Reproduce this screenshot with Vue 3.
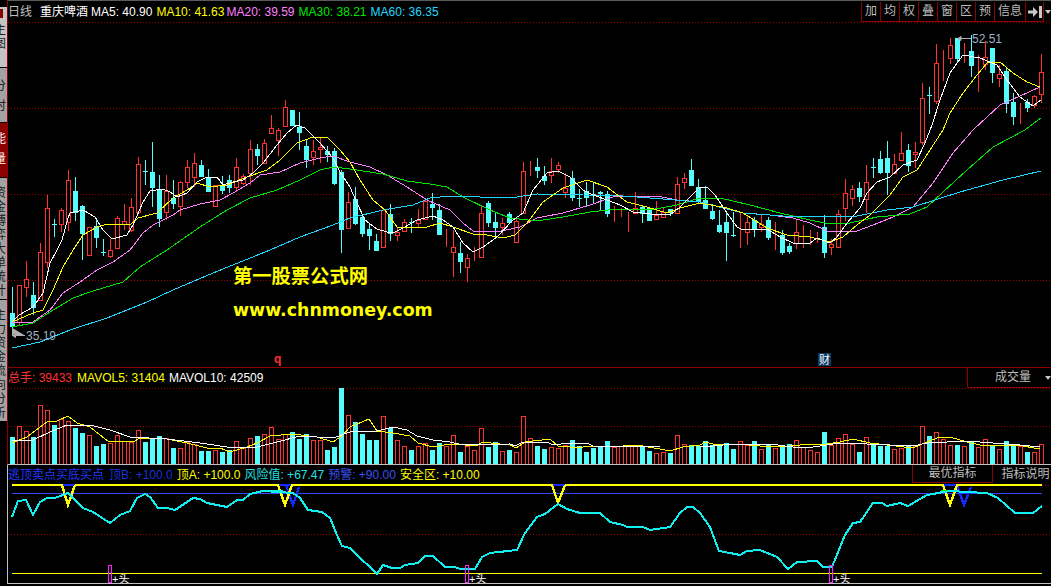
<template>
  <div class="terminal">
    <div class="side-tabs">
      <div v-for="tab in tabs" :key="tab.text" class="side-tab" :class="tab.cls">
        <span class="side-text">{{ tab.text }}</span>
      </div>
    </div>

    <div class="panels">
      <!-- K线 -->
      <section class="panel panel-main">
        <svg class="chart" width="1044" height="367" viewBox="7 0 1044 367">
          <line v-for="y in [22.5, 108.5, 194.5, 280.5]" :key="y" class="grid" x1="8" x2="1051" :y1="y" :y2="y" />
          <g shape-rendering="crispEdges">
            <template v-for="c in candles" :key="c.i">
              <rect class="wick" :class="c.type" :x="c.x + 2" :y="c.high" width="1" :height="Math.max(c.top - c.high, 0)" />
              <rect class="wick" :class="c.type" :x="c.x + 2" :y="c.bot" width="1" :height="Math.max(c.low - c.bot, 0)" />
              <rect v-if="c.type === 'up'" class="hollow" :x="c.x + 0.5" :y="c.top + 0.5" width="4" :height="c.bot - c.top" />
              <rect v-else class="solid" :x="c.x" :y="c.top" width="5" :height="c.bot - c.top + 1" />
            </template>
            <polyline v-for="l in maLines" :key="l.color" class="ma" :stroke="l.color" :points="l.points" />
          </g>
          <path class="mark-line" d="M958 38.5H971M958 38.5l3-2v4zM12.5 328V335.5H25M12.5 335.5l3-2v4z" />
          <text class="price" x="972" y="43">52.51</text>
          <text class="price" x="26" y="340">35.19</text>
          <text class="mark-q" x="274" y="363">q</text>
          <rect class="mark-bg" x="818" y="353" width="13" height="13" />
          <text class="mark-cai" x="819" y="364">财</text>
        </svg>

        <div class="legend legend-top">
          <span class="period">日线</span>
          <span class="stock">重庆啤酒</span>
          <span v-for="m in maLegend" :key="m.label" :class="{ tight: m.tight }" :style="{ color: m.color }">{{ m.label }}: {{ m.value }}</span>
        </div>

        <div class="toolbar">
          <span v-for="b in toolButtons" :key="b" class="tool-btn">{{ b }}</span>
          <span class="tool-btn tool-icon">
            <svg width="14" height="12" viewBox="0 0 14 12"><path d="M0 4.5h5V1l5 5-5 5V7.5H0z" fill="#c8c8c8" /><rect x="11" y="0" width="3" height="12" fill="#c8c8c8" /></svg>
          </span>
          <span class="tool-more"></span>
        </div>

        <div class="watermark">
          <div class="wm-cn">第一股票公式网</div>
          <div class="wm-en">www.chnmoney.com</div>
        </div>
      </section>

      <!-- 成交量 -->
      <section class="panel panel-vol">
        <svg class="chart" width="1044" height="96" viewBox="7 368 1044 96">
          <line v-for="y in [388.5, 426.5]" :key="y" class="grid" x1="8" x2="1051" :y1="y" :y2="y" />
          <g shape-rendering="crispEdges">
            <template v-for="b in volBars" :key="b.i">
              <rect v-if="b.type === 'up'" class="hollow" :x="b.x + 0.5" :y="b.top + 0.5" width="4" :height="464 - b.top" />
              <rect v-else class="solid" :x="b.x" :y="b.top" width="5" :height="464 - b.top" />
            </template>
            <polyline class="ma" stroke="#ffff00" :points="volMa5" />
            <polyline class="ma" stroke="#ffffff" :points="volMa10" />
          </g>
        </svg>
        <div class="legend legend-vol">
          <span class="c-red vol-first">总手: 39433</span>
          <span class="c-yellow">MAVOL5: 31404</span>
          <span class="c-white">MAVOL10: 42509</span>
        </div>
        <div class="vol-select">成交量<i class="caret"></i></div>
      </section>

      <!-- 逃顶指标 -->
      <section class="panel panel-ind">
        <svg class="chart" width="1044" height="118" viewBox="7 465 1044 118">
          <line class="grid" x1="8" x2="1051" y1="534.5" y2="534.5" />
          <g shape-rendering="crispEdges">
            <line x1="1042" x2="1051" y1="485.5" y2="485.5" class="grid" />
            <rect x="12" y="484" width="1030" height="2" fill="#ffff00" />
            <rect x="12" y="493" width="1030" height="1" fill="#3048ff" />
            <rect x="12" y="573" width="1030" height="1" fill="#ffff00" />
            <polyline v-for="v in blueVs" :key="v" class="ind-v" stroke="#1428ff" :points="v" />
            <rect v-for="x in blueTops" :key="x" :x="x" y="484" width="12" height="2" fill="#1428ff" />
            <polyline v-for="v in yellowVs" :key="v" class="ind-v" stroke="#ffff00" :points="v" />
            <path class="ind-green" d="M262 491H277M941 491H956" />
            <polyline class="ind-line" :points="riskLine" />
            <path class="ind-thin" d="M256 493L262 490H283M937 493L943 491H972" />
            <rect v-for="x in headMarks" :key="x" class="head-box" :x="x + 0.5" y="565.5" width="3" height="17" />
          </g>
          <text v-for="x in headMarks" :key="x" class="head-text" :x="x + 4" y="583">+头</text>
        </svg>
        <div class="legend legend-ind">
          <span class="c-blue ind-first">逃顶卖点买底买点</span>
          <span class="c-navy">顶B: +100.0</span>
          <span class="c-yellow">顶A: +100.0</span>
          <span class="c-cyan">风险值: +67.47</span>
          <span class="c-blue2">预警: +90.00</span>
          <span class="c-yellow">安全区: +10.00</span>
        </div>
        <div class="ind-tabs">
          <span class="ind-tab ind-tab-box">最优指标</span>
          <span class="ind-tab ind-tab-plain">指标说明</span>
        </div>
      </section>
    </div>
  </div>
</template>

<script setup>
const tabs = [
  { text: "主图", cls: "tab-light" },
  { text: "分时", cls: "tab-gray tab-wide" },
  { text: "能量", cls: "tab-red" },
  { text: "资金博弈大单统计", cls: "tab-gray tab-tall" },
  { text: "主力资金流向分析", cls: "tab-gray tab-tall" },
];

const toolButtons = ["加", "均", "权", "叠", "窗", "区", "预", "信息"];

const maLegend = [
  { label: "MA5", value: "40.90", color: "#ffffff" },
  { label: "MA10", value: "41.63", color: "#ffff00", tight: true },
  { label: "MA20", value: "39.59", color: "#ff80ff" },
  { label: "MA30", value: "38.21", color: "#00e600" },
  { label: "MA60", value: "36.35", color: "#20d8ff" },
];

// u=红 d=青  [type, high, top, bot, low]
const candleData = [
  ["d",287,313,326,335],["u",285,285,322,325],["u",261,279,287,297],["d",282,295,307,315],["u",243,252,300,300],
  ["u",195,208,262,268],["d",219,224,224,237],["u",208,210,224,232],["u",170,180,222,231],["d",177,191,212,221],
  ["d",205,206,233,260],["u",227,227,255,255],["d",220,226,237,248],["d",239,252,252,256],["u",239,250,256,258],
  ["u",216,218,248,248],["u",204,221,224,230],["u",198,207,230,232],["u",157,164,212,214],["d",160,171,171,185],
  ["d",142,172,187,207],["d",175,189,218,227],["u",175,191,212,220],["d",180,198,203,209],["u",181,182,206,216],
  ["u",160,167,182,188],["u",153,163,177,187],["d",160,165,176,176],["d",169,177,191,191],["u",185,185,206,206],
  ["d",176,185,190,194],["d",175,180,187,193],["u",158,167,187,192],["u",174,176,183,185],["u",140,149,173,185],
  ["d",144,149,155,165],["u",139,143,163,163],["u",115,128,133,133],["u",128,130,140,156],["u",100,107,126,126],
  ["d",110,110,125,125],["d",112,127,132,150],["d",140,146,159,168],["u",140,151,157,165],["u",137,147,149,163],
  ["d",146,151,154,162],["d",148,151,183,185],["d",170,172,229,253],["u",192,202,228,228],["d",187,199,223,225],
  ["d",215,217,233,237],["d",223,229,235,250],["d",234,241,250,250],["u",210,210,247,247],["d",204,214,233,241],
  ["u",227,232,235,241],["u",219,222,231,232],["d",218,222,222,233],["u",209,220,223,227],["u",199,201,219,219],
  ["d",193,204,207,220],["d",204,210,234,235],["u",229,237,237,247],["u",230,247,252,277],["d",242,253,261,273],
  ["u",254,258,267,282],["u",247,257,257,261],["u",205,213,257,257],["d",201,203,222,227],["d",213,222,227,236],
  ["u",218,223,227,235],["d",212,214,222,222],["u",219,221,242,243],["u",162,171,213,213],["u",161,168,168,176],
  ["d",158,167,170,178],["d",166,176,180,185],["u",158,171,175,183],["u",162,165,169,173],["u",173,188,192,198],
  ["d",171,178,197,201],["d",189,198,198,207],["d",182,191,197,207],["d",183,194,194,203],["d",191,192,193,210],
  ["d",191,194,213,217],["u",206,212,212,222],["u",208,212,212,217],["u",212,217,217,232],["u",192,208,213,214],
  ["d",205,207,213,223],["d",207,208,220,221],["u",201,215,219,219],["u",207,212,217,218],["d",209,209,212,216],
  ["u",177,184,213,213],["u",173,178,182,189],["d",159,170,185,185],["d",179,187,201,204],["d",186,200,208,208],
  ["d",204,211,218,220],["d",210,225,231,233],["d",212,222,232,261],["d",212,235,235,237],["u",213,234,234,248],
  ["u",215,222,232,245],["d",217,220,228,237],["u",215,224,227,232],["d",217,220,237,240],["u",222,237,237,250],
  ["d",230,235,252,255],["d",243,246,251,254],["u",220,232,243,249],["u",225,239,239,248],["u",230,241,241,245],
  ["u",232,239,239,243],["d",215,227,252,258],["u",239,244,247,255],["u",210,214,247,247],["u",179,193,208,221],
  ["u",185,189,198,206],["d",182,188,196,202],["u",165,182,199,213],["d",158,167,167,178],["d",151,159,172,174],
  ["d",141,158,172,195],["u",154,164,173,173],["u",132,153,160,160],["d",144,150,165,172],["u",142,152,154,168],
  ["u",83,98,142,145],["d",87,95,95,114],["u",44,63,101,104],["u",50,58,58,81],["u",38,45,58,64],
  ["d",38,38,58,63],["u",43,52,52,63],["d",35,51,65,77],["u",55,65,65,92],["u",41,57,64,70],
  ["d",48,48,72,83],["u",65,74,78,87],["d",67,71,103,113],["d",93,102,116,125],["u",103,110,110,124],
  ["d",99,102,107,112],["u",95,96,105,108],["u",54,72,94,103],
];

const candles = candleData.map((c, i) => ({
  i,
  x: 10 + 7 * i,
  type: c[0] === "u" ? "up" : "down",
  high: c[1],
  top: c[2],
  bot: c[3],
  low: c[4],
}));

// 负数 = 青柱, 正数 = 红柱
const volData = [
  -437,426,431,-437,405,410,-425,419,421,-428,-433,435,-446,-444,443,435,441,442,430,-442,
  -438,-436,438,-448,448,442,444,-451,-451,450,-452,-450,441,448,438,-436,434,427,439,434,
  -432,-439,-434,440,440,-450,-447,-388,415,-422,-434,-440,-440,416,-428,440,446,-450,446,443,
  -450,-443,446,435,-452,446,450,428,-447,-442,451,-450,452,416,438,-446,-449,447,448,445,
  -440,-446,-452,-448,-447,-441,447,446,446,446,-447,-451,453,452,-453,435,444,-445,-446,-441,
  -445,-445,-443,-449,441,445,-441,449,-445,448,-446,-444,440,447,450,452,-432,445,438,434,
  444,-452,437,-445,-446,-446,449,448,-445,446,426,-436,432,439,445,-445,446,-442,447,439,
  -445,449,-441,-445,446,-452,452,444,
];

const volBars = volData.map((v, i) => ({
  i,
  x: 10 + 7 * i,
  type: v > 0 ? "up" : "down",
  top: Math.abs(v),
}));

const ma5 = "12,322 19,315 26,311 33,307 43,293 50,263 57,250 62,240 68,218 70,213 83,210 95,217 103,230 112,239 127,235 133,225 143,202 150,191 163,189 170,192 177,197 187,193 197,182 207,177 217,177 223,185 233,182 243,180 253,173 263,163 277,145 287,133 293,128 297,125 305,128 320,143 333,158 340,172 350,187 357,203 365,220 377,229 387,232 393,233 403,228 417,220 433,216 443,220 453,227 463,243 473,252 483,247 497,237 513,220 523,213 533,190 547,173 558,171 570,177 583,190 593,195 607,200 620,205 633,212 650,214 670,215 680,207 687,200 700,187 707,187 715,195 727,213 737,227 743,230 767,229 780,237 793,243 810,243 817,238 830,243 837,237 847,223 860,208 867,193 877,182 890,177 903,165 917,160 925,143 932,125 940,100 950,73 963,55 980,58 997,65 1007,80 1020,97 1033,106 1041,100";
const ma10 = "12,322 33,313 43,310 53,290 63,267 73,250 83,235 97,227 107,224 130,225 138,218 157,213 173,198 187,190 197,183 210,187 227,185 247,177 267,170 280,160 297,143 313,137 327,137 340,150 350,162 360,180 373,200 385,210 397,227 407,227 427,227 440,223 453,227 473,234 487,235 503,238 515,235 527,223 543,202 563,188 587,180 607,187 627,202 647,207 667,213 680,208 700,203 727,208 743,213 767,228 787,235 810,237 830,242 843,237 857,225 870,215 890,195 903,177 917,170 930,150 943,130 950,113 963,93 977,75 987,63 1000,62 1013,73 1027,82 1040,87";
const ma20 = "12,322 33,322 50,310 63,293 80,282 97,270 113,262 130,250 143,233 153,225 173,215 180,210 200,204 220,200 233,193 250,183 260,175 280,172 300,163 320,158 333,156 350,162 370,167 387,175 407,187 427,200 450,210 463,223 473,231 497,232 520,227 537,218 563,213 590,205 613,197 637,196 657,196 677,200 700,202 720,207 743,213 770,215 793,218 810,223 827,231 857,231 873,225 893,217 913,207 933,183 953,153 973,130 1000,105 1040,87";
const ma30 = "12,327 33,323 50,312 73,298 93,291 123,282 140,267 167,250 200,227 227,210 250,198 277,190 300,180 320,170 333,167 350,169 383,174 407,181 430,184 447,187 463,197 490,210 510,218 537,221 563,217 590,212 617,209 650,210 677,205 700,198 720,198 750,205 780,213 810,220 830,224 850,223 877,217 910,214 927,207 943,192 967,170 993,147 1025,130 1041,118";
const ma60 = "12,348 40,342 70,330 107,318 147,302 173,290 213,273 270,250 300,237 333,225 350,218 383,210 413,205 430,198 450,196 510,198 537,194 583,195 623,196 650,198 700,202 743,213 783,216 857,216 887,210 913,207 960,192 1003,180 1041,171";

const maLines = [
  { color: "#ff80ff", points: ma20 },
  { color: "#00e600", points: ma30 },
  { color: "#20d8ff", points: ma60 },
  { color: "#ffff00", points: ma10 },
  { color: "#ffffff", points: ma5 },
];

const volMa5 = "12,443 27,437 40,427 47,422 57,421 68,416 77,423 90,427 100,435 108,441 133,442 140,438 167,439 187,443 207,448 220,448 230,452 247,447 257,443 270,436 293,434 317,437 333,442 343,435 350,427 369,419 377,431 393,433 410,436 418,443 433,447 450,444 465,445 477,446 482,442 500,444 510,445 516,448 525,442 550,439 558,446 570,447 583,447 593,446 610,447 637,445 660,449 670,451 683,447 700,445 705,442 717,445 738,444 760,446 780,447 800,445 827,444 840,442 853,439 870,443 887,445 913,448 927,442 940,437 950,437 967,442 980,445 1017,445 1040,449";
const volMa10 = "12,441 33,440 50,432 67,425 90,425 110,430 130,437 167,439 200,443 227,447 253,448 277,442 300,436 333,438 350,432 377,431 393,427 407,430 417,436 433,440 450,442 463,445 510,444 515,446 523,442 547,442 553,445 570,443 587,443 593,446 660,447 700,447 713,446 733,444 770,444 793,447 813,447 833,444 843,443 913,446 927,443 967,441 993,443 1020,445 1040,447";

const riskLine = "12,517 18,501 26,500 33,515 40,502 47,498 55,498 68,493 83,508 93,512 110,523 120,515 130,511 137,498 145,494 150,497 158,508 167,508 175,510 193,498 200,499 207,503 227,507 237,500 243,500 250,494 263,491 293,493 300,498 308,510 322,512 330,518 337,535 342,546 350,548 360,558 370,567 377,574 383,565 392,568 400,568 405,565 418,563 425,556 433,556 445,567 455,567 460,569 475,569 482,557 490,553 517,550 525,533 537,517 545,514 558,504 567,509 580,513 600,513 610,522 623,525 627,527 643,527 650,530 670,527 680,513 687,507 693,507 700,513 710,527 719,551 730,553 740,555 747,551 760,550 777,557 788,569 797,562 817,561 823,567 832,567 845,535 853,523 860,522 873,503 882,503 887,506 900,503 908,506 927,495 950,491 967,492 987,493 998,498 1015,513 1033,513 1042,506";

const yellowVs = ["62,485 68,505 75,485", "278,485 285,505 292,485", "552,485 558,503 565,485", "943,485 950,505 957,485"];
const blueVs = ["286,485 293,505 299,487", "957,485 964,505 971,487"];
const blueTops = [63, 279, 553, 944];
const headMarks = [108, 465, 829];
</script>

<style scoped>
.terminal {
  display: flex;
  width: 1051px;
  height: 586px;
  overflow: hidden;
  background: #000;
  font-family: "Liberation Sans", "Noto Sans CJK SC", sans-serif;
  font-size: 12px;
}

.side-tabs {
  display: flex;
  flex-direction: column;
  flex: none;
  width: 7px;
  padding-top: 7px;
  gap: 1px;
}

.side-tab {
  position: relative;
  flex: none;
  overflow: hidden;
  height: 54px;
  padding-top: 16px;
  box-sizing: border-box;
}

.side-text {
  display: block;
  width: 12px;
  margin-left: -6px;
  line-height: 14px;
}

.tab-light {
  height: 60px;
  background: #c4c4c4;
  color: #202020;
}

.tab-light::before {
  content: "";
  position: absolute;
  left: 0;
  top: 2px;
  width: 3px;
  height: 9px;
  background: #8c0000;
}

.tab-gray {
  background: #a2a2a2;
  color: #202020;
}

.tab-wide {
  padding-top: 8px;
}

.tab-wide .side-text,
.tab-red .side-text {
  line-height: 20px;
}

.tab-red {
  background: #8c0000;
  color: #fff;
  padding-top: 6px;
}

.tab-tall {
  height: 121px;
  padding-top: 8px;
}

.panels {
  flex: none;
  width: 1044px;
  display: flex;
  flex-direction: column;
}

.panel {
  position: relative;
  flex: none;
  box-sizing: border-box;
}

.panel-main {
  height: 368px;
  border-top: 1px solid #5a5a5a;
  border-left: 1px solid #8c0000;
  border-bottom: 1px solid #8c0000;
}

.panel-vol {
  height: 97px;
  border-left: 1px solid #8c0000;
  border-bottom: 1px solid #c0c0c0;
}

.panel-ind {
  height: 119px;
  border-left: 1px solid #c0c0c0;
  border-bottom: 1px solid #c0c0c0;
}

.chart {
  position: absolute;
  left: -1px;
  top: 0;
  display: block;
}

.panel-main .chart {
  top: -1px;
}

.grid {
  stroke: #a00000;
  stroke-width: 1;
  stroke-dasharray: 1 2;
}

.wick.up {
  fill: #ff3232;
}

.wick.down {
  fill: #54fcfc;
}

.hollow {
  fill: #000;
  stroke: #ff3232;
  stroke-width: 1;
}

.solid {
  fill: #54fcfc;
}

.ma {
  fill: none;
  stroke-width: 1;
}

.mark-line {
  fill: #b0b0b0;
  stroke: #b0b0b0;
  stroke-width: 1;
}

.price {
  fill: #9fb2c4;
  font-size: 12px;
}

.mark-q {
  fill: #ff3030;
  font-size: 12px;
  font-weight: 700;
}

.mark-bg {
  fill: #0a3a66;
}

.mark-cai {
  fill: #fff;
  font-size: 11px;
}

.legend {
  position: relative;
  display: flex;
  white-space: nowrap;
  line-height: 14px;
}

.legend-top {
  padding-top: 4px;
  gap: 4px;
}

.period {
  color: #c0c0c0;
  margin-right: 4px;
}

.stock {
  color: #fff;
  margin-right: -1px;
}

.tight {
  margin-right: -2px;
}

.toolbar {
  position: absolute;
  right: 0;
  top: 1px;
  display: flex;
  height: 20px;
  background: #000;
}

.tool-btn {
  box-sizing: border-box;
  padding: 0 3px;
  min-width: 19px;
  line-height: 19px;
  text-align: center;
  color: #bdbdbd;
  border-left: 1px solid #8c0000;
  border-bottom: 1px solid #8c0000;
}

.tool-icon {
  display: flex;
  align-items: center;
  justify-content: center;
  width: 19px;
  padding: 0;
  border-right: 1px solid #8c0000;
}

.tool-more {
  width: 7px;
  position: relative;
}

.tool-more::after {
  content: "";
  position: absolute;
  right: 0;
  top: 8px;
  border-left: 3px solid transparent;
  border-right: 3px solid transparent;
  border-top: 4px solid #c8c8c8;
}

.watermark {
  position: absolute;
  left: 225px;
  top: 261px;
  color: #ffff00;
  font-weight: 700;
}

.wm-cn {
  font-size: 19.3px;
  line-height: 26px;
  font-family: "Noto Sans CJK SC", sans-serif;
}

.wm-en {
  margin-top: 11px;
  font-size: 17.4px;
  line-height: 22px;
  font-family: "DejaVu Sans", sans-serif;
}

.legend-vol {
  padding-top: 3px;
  gap: 4px;
}

.vol-first {
  margin-right: 1px;
}

.legend-ind {
  padding-top: 3px;
  gap: 4px;
}

.ind-first {
  margin-right: 1px;
}

.c-red {
  color: #ff3232;
}

.c-yellow {
  color: #ffff00;
}

.c-white {
  color: #fff;
}

.c-blue {
  color: #2038ff;
}

.c-navy {
  color: #1a30d8;
}

.c-cyan {
  color: #20e0e0;
}

.c-blue2 {
  color: #3a50f0;
}

.vol-select {
  position: absolute;
  right: 0;
  top: 0;
  box-sizing: border-box;
  width: 84px;
  height: 20px;
  padding-left: 27px;
  line-height: 19px;
  color: #bdbdbd;
  background: #000;
  border-left: 1px solid #8c0000;
  border-bottom: 1px solid #8c0000;
}

.caret {
  position: absolute;
  right: 0;
  top: 8px;
  border-left: 3px solid transparent;
  border-right: 3px solid transparent;
  border-top: 4px solid #c8c8c8;
}

.ind-line {
  fill: none;
  stroke: #10f0f0;
  stroke-width: 2;
}

.ind-v {
  fill: none;
  stroke-width: 2.4;
}

.ind-green {
  fill: none;
  stroke: #00f000;
  stroke-width: 2;
}

.ind-thin {
  fill: none;
  stroke: #10f0f0;
  stroke-width: 1;
}

.head-box {
  fill: none;
  stroke: #ff20ff;
  stroke-width: 1;
}

.head-text {
  fill: #fff;
  font-size: 11px;
}

.ind-tabs {
  position: absolute;
  right: 0;
  top: 0;
  display: flex;
  height: 18px;
  background: #000;
}

.ind-tab {
  box-sizing: border-box;
  width: 58px;
  line-height: 18px;
  text-align: center;
  color: #bdbdbd;
}

.ind-tab-plain {
  padding-left: 7px;
  white-space: nowrap;
}

.ind-tab-box {
  width: 81px;
  border: 1px solid #8c0000;
  border-top: none;
  line-height: 17px;
}
</style>

<style>
html,
body {
  background: #000;
}
</style>
